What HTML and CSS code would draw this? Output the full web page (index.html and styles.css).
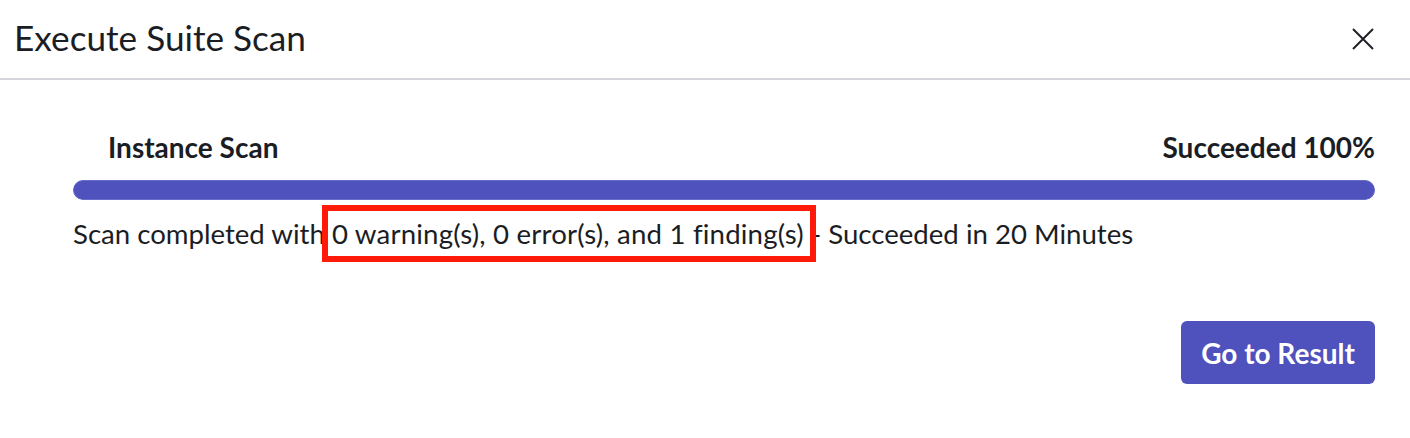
FILE: index.html
```html
<!DOCTYPE html>
<html>
<head>
<meta charset="utf-8">
<link rel="stylesheet" href="styles.css">
</head>
<body>
<div class="dialog">
  <header class="dialog-header">
    <h1 class="dialog-title">Execute Suite Scan</h1>
    <button class="close-btn" aria-label="Close">
      <svg width="22" height="22" viewBox="0 0 22 22"><path d="M1 1 L21 21 M21 1 L1 21" stroke="#1f2128" stroke-width="2" fill="none"/></svg>
    </button>
  </header>
  <main class="dialog-body">
    <div class="progress-labels">
      <span class="label-left">Instance Scan</span>
      <span class="label-right">Succeeded 100%</span>
    </div>
    <div class="progress-track"><div class="progress-fill" style="width:100%"></div></div>
    <p class="status">Scan completed with <span class="highlight">0 warning(s), 0 error(s), and 1 finding(s)</span> - Succeeded in 20 Minutes</p>
    <div class="actions">
      <button class="primary-btn">Go to Result</button>
    </div>
  </main>
</div>
</body>
</html>
```

FILE: styles.css
```css
html, body {
  margin: 0;
  padding: 0;
  background: #ffffff;
}
body {
  font-family: Lato, "Liberation Sans", sans-serif;
  color: #1b1d24;
}
.dialog {
  width: 1410px;
  height: 438px;
  display: flex;
  flex-direction: column;
}
.dialog-header {
  height: 78px;
  border-bottom: 2px solid #d5d6db;
  display: flex;
  align-items: center;
  justify-content: space-between;
  padding: 0 36px 0 14px;
}
.dialog-title {
  margin: 0;
  font-size: 35.2px;
  font-weight: 400;
  line-height: 1;
  padding-bottom: 2px;
}
.close-btn {
  border: 0;
  background: transparent;
  padding: 0;
  width: 22px;
  height: 22px;
  display: flex;
  cursor: pointer;
}
.dialog-body {
  padding: 52px 35px 0 73px;
  display: flex;
  flex-direction: column;
}
.progress-labels {
  display: flex;
  justify-content: space-between;
  padding-left: 35px;
  font-size: 28px;
  font-weight: 700;
  line-height: 30px;
}
.progress-track {
  margin-top: 18px;
  height: 20px;
  border-radius: 10px;
  background: #e3e4f4;
  overflow: hidden;
}
.progress-fill {
  height: 100%;
  background: #4f51bd;
  border-radius: 10px;
  box-shadow: inset 0 0 0 1px #6a6cc9;
}
.status {
  margin: 17px 0 0 0;
  font-size: 27.6px;
  line-height: 34px;
}
.highlight {
  position: relative;
  letter-spacing: 0.19px;
}
.highlight::after {
  content: "";
  position: absolute;
  left: -10px;
  right: -12px;
  top: -12px;
  bottom: -12px;
  border: 6px solid #ff1a0a;
  pointer-events: none;
}
.actions {
  display: flex;
  justify-content: flex-end;
  margin-top: 70px;
}
.primary-btn {
  width: 194px;
  height: 63px;
  border: 0;
  border-radius: 6px;
  background: #4f51bd;
  color: #ffffff;
  font-family: Lato, "Liberation Sans", sans-serif;
  font-size: 28px;
  font-weight: 700;
  cursor: pointer;
}
```
